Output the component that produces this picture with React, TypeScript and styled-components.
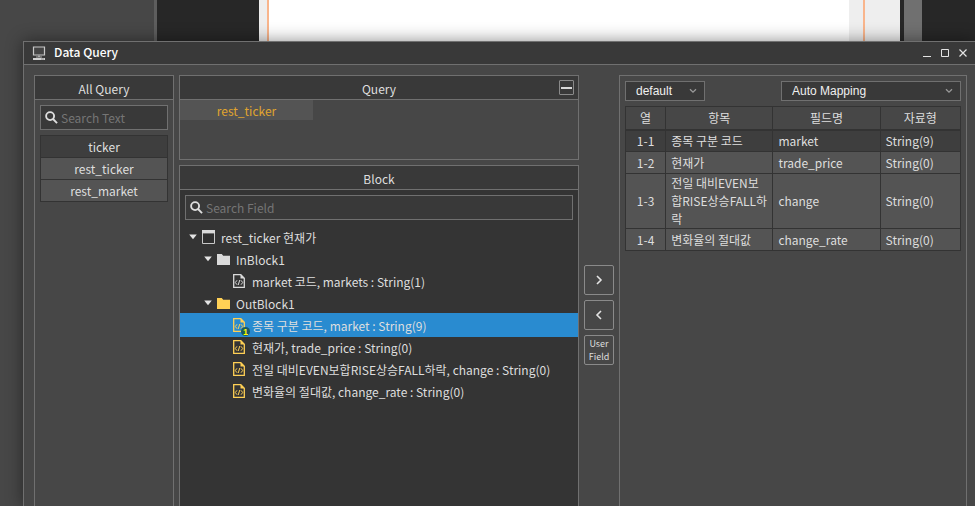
import React from "react";
import styled, { createGlobalStyle } from "styled-components";

const line = "#707070";
const bar = "#393939";
const surface = "#474747";
const text = "#dedede";
const gold = "#ffd055";

const GlobalStyle = createGlobalStyle`
  *, *::before, *::after { box-sizing: border-box; }
  body {
    margin: 0;
    background: ${surface};
    color: ${text};
    font: 12px/18px "Noto Sans CJK KR", sans-serif;
    overflow: hidden;
  }
  button, input { font: inherit; color: inherit; }
  svg { display: block; flex: none; }
`;

/* Editor canvas with the dialog stacked above it in the same grid cell */
const Screen = styled.div`
  display: grid;
  grid-template: minmax(100vh, auto) / minmax(0, 1fr);
`;
const Editor = styled.div`
  grid-area: 1 / 1;
  display: flex;
`;
const Strip = styled.div<{ $width: number; $color: string }>`
  flex: 0 0 ${(p) => p.$width}px;
  background: ${(p) => p.$color};
`;
const Paper = styled.div`
  flex: 1;
  background: #fff;
`;

const Dialog = styled.section`
  grid-area: 1 / 1;
  display: flex;
  flex-direction: column;
  margin: 41px 0 0 23px;
  background: ${surface};
  border: solid ${line};
  border-width: 1px 0 0 1px;
  box-shadow: 0 0 16px rgba(0, 0, 0, 0.45);
`;
const TitleBar = styled.header`
  display: flex;
  align-items: center;
  height: 23px;
  padding: 0 6px 0 8px;
  background: ${bar};
  border-bottom: 1px solid ${line};
`;
const Title = styled.h1`
  flex: 1;
  margin: 0 0 2px 8px;
  color: #fff;
  font-size: 12px;
  font-weight: 500;
  line-height: 18px;
`;
const WindowButtons = styled.div`
  display: flex;
  gap: 6px;
`;
const WindowButton = styled.button`
  padding: 0;
  border: 0;
  background: none;
  color: #e4e4e4;
`;
const Content = styled.div`
  flex: 1;
  display: grid;
  grid-template-columns: 140px minmax(0, 400fr) 30px minmax(0, 348fr);
  gap: 5px;
  padding: 10px 8px 0 10px;
`;
const Column = styled.div`
  display: flex;
  flex-direction: column;
  gap: 5px;
`;
const Panel = styled.section<{ $dark?: boolean; $open?: boolean; $minHeight?: number }>`
  flex: ${(p) => (p.$open ? 1 : "none")};
  min-height: ${(p) => p.$minHeight ?? 0}px;
  background: ${(p) => (p.$dark ? "#343434" : surface)};
  border: 1px solid ${line};
  border-bottom-width: ${(p) => (p.$open ? 0 : 1)}px;
`;
const PanelHeader = styled.div`
  display: grid;
  grid-template-columns: 19px 1fr 19px;
  align-items: center;
  height: 24px;
  background: ${bar};
  border-bottom: 1px solid ${line};
`;
const PanelTitle = styled.h2`
  margin: 2px 0 0;
  font-size: 12px;
  font-weight: 400;
  line-height: 18px;
  text-align: center;
  grid-column: 2;
`;
const CollapseButton = styled.button`
  display: grid;
  place-items: center;
  width: 15px;
  height: 15px;
  padding: 0;
  background: none;
  border: 1px solid #8a8a8a;
  border-radius: 1px;
`;
const SearchBox = styled.label`
  display: flex;
  align-items: center;
  gap: 3px;
  height: 25px;
  margin: 5px;
  padding: 0 4px;
  background: ${bar};
  border: 1px solid ${line};
`;
const SearchInput = styled.input`
  flex: 1;
  min-width: 0;
  height: 20px;
  padding: 0;
  border: 0;
  outline: 0;
  background: none;
  &::placeholder { color: #757575; opacity: 1; }
`;
const QueryList = styled.ul`
  margin: 0 5px;
  padding: 0;
  list-style: none;
  border: 1px solid #333;
`;
const QueryItem = styled.li`
  & + & { border-top: 1px solid #333; }
`;
const QueryButton = styled.button<{ $active?: boolean }>`
  display: block;
  width: 100%;
  height: 21px;
  padding: 1px 0 0;
  border: 0;
  line-height: 18px;
  background: ${(p) => (p.$active ? "#3e3e3e" : "#545454")};
`;
const QueryTab = styled.button`
  display: block;
  width: 133px;
  height: 20px;
  padding: 1px 0 0;
  border: 0;
  line-height: 18px;
  background: #545454;
  color: #e0a52e;
`;
const Tree = styled.ul`
  margin: 6px 0 0;
  padding: 0;
  list-style: none;
`;
const TreeRow = styled.li<{ $level: number; $selected?: boolean }>`
  display: flex;
  align-items: center;
  height: ${(p) => (p.$selected ? 24 : 22)}px;
  margin: ${(p) => (p.$selected ? "-1px 0" : "0")};
  padding-left: ${(p) => 8 + p.$level * 15}px;
  background: ${(p) => (p.$selected ? "#298bd0" : "none")};
  white-space: nowrap;
`;
const Twisty = styled.button`
  padding: 0 5px 0 1px;
  border: 0;
  background: none;
`;
const TreeLabel = styled.span`
  margin: 1px 0 0 6px;
`;
const FileMark = styled.span`
  position: relative;
  width: 13px;
`;
const Badge = styled.span`
  position: absolute;
  right: -4px;
  bottom: -4px;
  width: 9px;
  height: 9px;
  border-radius: 50%;
  background: #1c5a62;
  color: #ff0;
  font: bold 9px/10px "Liberation Sans", sans-serif;
  text-align: center;
`;
const MoveColumn = styled.div`
  display: flex;
  flex-direction: column;
  gap: 5px;
  padding-top: 190px;
`;
const MoveButton = styled.button`
  display: grid;
  place-items: center;
  height: 30px;
  padding: 0;
  background: none;
  border: 1px solid #8a8a8a;
  border-radius: 2px;
  font-size: 9px;
  line-height: 13px;
`;
const SelectRow = styled.div`
  display: flex;
  justify-content: space-between;
  padding: 5px 5px 0;
`;
const SelectBox = styled.div<{ $width: number }>`
  display: grid;
  grid-template-columns: 1fr 22px;
  align-items: center;
  width: ${(p) => p.$width}px;
  height: 20px;
  background: ${bar};
  border: 1px solid ${line};
  svg { grid-area: 1 / 2; justify-self: center; pointer-events: none; z-index: 1; }
`;
const Select = styled.select`
  grid-area: 1 / 1 / 2 / 3;
  appearance: none;
  height: 18px;
  padding: 0 20px 0 10px;
  border: 0;
  background: none;
  color: #f0f0f0;
  font: 12px/18px "Liberation Sans", sans-serif;
`;
const MappingTable = styled.table`
  width: calc(100% - 10px);
  margin: 5px 5px 0;
  border-collapse: collapse;
  table-layout: fixed;
`;
const HeadCell = styled.th<{ $share: number }>`
  width: ${(p) => p.$share}%;
  height: 23px;
  padding: 1px 0 0;
  border: 1px solid #333;
  border-bottom-width: 2px;
  font-weight: 400;
`;
const Row = styled.tr<{ $active?: boolean }>`
  background: ${(p) => (p.$active ? "#3e3e3e" : "#545454")};
`;
const Cell = styled.td<{ $center?: boolean }>`
  height: 22px;
  padding: 0 ${(p) => (p.$center ? 0 : 5)}px;
  border: 1px solid #333;
  line-height: 18px;
  text-align: ${(p) => (p.$center ? "center" : "left")};
  word-break: break-all;
`;

const SearchIcon = () => (
  <svg width="13" height="13" viewBox="0 0 14 14" fill="none" stroke="#dedede" strokeWidth="2">
    <circle cx="5.5" cy="5.5" r="4.3" />
    <path d="M8.6 8.6 13 13" />
  </svg>
);
const ComputerIcon = () => (
  <svg width="14" height="14" viewBox="0 0 14 14">
    <path d="M1.5 1h11v8h-11z" fill="#444" stroke="#c8c8c8" strokeWidth="1.2" />
    <path d="M6 9.5h2V11H6zM4 10.5h6v1H4z" fill="#aaa" />
    <path d="M1 12h12v2H1z" fill="#d0d0d0" />
    <path d="M9 12.5h3v1H9z" fill="#888" />
  </svg>
);
const ArrowDown = () => (
  <svg width="8" height="6" viewBox="0 0 8 6"><path d="M.2.5h7.6L4 5.2z" fill="#e4e4e4" /></svg>
);
const FrameIcon = () => (
  <svg width="13" height="14" viewBox="0 0 13 14">
    <path d="M.5 1.5h12v12H.5z" fill="#2f2f2f" stroke="#c8c8c8" />
    <path d="M0 0h13v3.4H0z" fill="#dadada" />
  </svg>
);
const FolderIcon = ({ color }: { color: string }) => (
  <svg width="13" height="11" viewBox="0 0 13 11"><path d="M0 0h4.8l1.4 1.8H13V11H0z" fill={color} /></svg>
);
const FileIcon = ({ color }: { color: string }) => (
  <svg width="12" height="14" viewBox="0 0 12 14" fill="none" stroke={color}>
    <path d="M.7.7h7.1l3.5 3.5v9.1H.7z" strokeWidth="1.3" />
    <path d="M7.5.5v4h4z" fill={color} stroke="none" />
    <path d="M4 6.3 2.3 8.5 4 10.7M8 6.3l1.7 2.2L8 10.7M6.8 6 5.2 11" strokeWidth="1" />
  </svg>
);
const SelectArrow = () => (
  <svg width="8" height="6" viewBox="0 0 8 6" fill="none" stroke="#999" strokeWidth="1.3">
    <path d="M1 1.2 4 4.2 7 1.2" />
  </svg>
);
const MoveIcon = ({ d }: { d: string }) => (
  <svg width="8" height="10" viewBox="0 0 8 10" fill="none" stroke="#e4e4e4" strokeWidth="1.6"><path d={d} /></svg>
);

const fields = [
  { id: "1-1", item: "종목 구분 코드", name: "market", type: "String(9)" },
  { id: "1-2", item: "현재가", name: "trade_price", type: "String(0)" },
  { id: "1-3", item: "전일 대비EVEN보합RISE상승FALL하락", name: "change", type: "String(0)" },
  { id: "1-4", item: "변화율의 절대값", name: "change_rate", type: "String(0)" },
];

const Folder = ({ level, label, icon }: { level: number; label: string; icon: React.ReactNode }) => (
  <TreeRow $level={level}>
    <Twisty aria-label={`Toggle ${label}`}><ArrowDown /></Twisty>
    {icon}
    <TreeLabel>{label}</TreeLabel>
  </TreeRow>
);

export default function App() {
  return (
    <>
      <GlobalStyle />
      <Screen>
        <Editor>
          <Strip $width={154} $color={surface} />
          <Strip $width={3} $color="#5e5e5e" />
          <Strip $width={102} $color="#272727" />
          <Strip $width={8} $color="#eeeeee" />
          <Strip $width={2} $color="#f9b58c" />
          <Paper />
          <Strip $width={14} $color="#eeeeee" />
          <Strip $width={2} $color="#f9b58c" />
          <Strip $width={35} $color="#eeeeee" />
          <Strip $width={4} $color="#272727" />
          <Strip $width={18} $color="#707070" />
          <Strip $width={53} $color="#272727" />
        </Editor>
        <Dialog aria-label="Data Query">
          <TitleBar>
            <ComputerIcon />
            <Title>Data Query</Title>
            <WindowButtons>
              <WindowButton aria-label="Minimize">
                <svg width="12" height="12" viewBox="0 0 12 12"><path d="M2 9.5h8" stroke="currentColor" /></svg>
              </WindowButton>
              <WindowButton aria-label="Maximize">
                <svg width="12" height="12" viewBox="0 0 12 12"><path d="M2.5 2.5h7v7h-7z" fill="none" stroke="currentColor" /></svg>
              </WindowButton>
              <WindowButton aria-label="Close">
                <svg width="12" height="12" viewBox="0 0 12 12"><path d="m2.5 2.5 7 7m0-7-7 7" stroke="currentColor" strokeWidth="1.2" /></svg>
              </WindowButton>
            </WindowButtons>
          </TitleBar>
          <Content>
            <Panel $open>
              <PanelHeader><PanelTitle>All Query</PanelTitle></PanelHeader>
              <SearchBox>
                <SearchIcon />
                <SearchInput placeholder="Search Text" aria-label="Search Text" />
              </SearchBox>
              <QueryList>
                {["ticker", "rest_ticker", "rest_market"].map((name, i) => (
                  <QueryItem key={name}><QueryButton $active={i === 0}>{name}</QueryButton></QueryItem>
                ))}
              </QueryList>
            </Panel>
            <Column>
              <Panel $minHeight={85}>
                <PanelHeader>
                  <PanelTitle>Query</PanelTitle>
                  <CollapseButton aria-label="Collapse Query">
                    <svg width="11" height="2" viewBox="0 0 11 2"><path d="M0 0h11v2H0z" fill="#d8d8d8" /></svg>
                  </CollapseButton>
                </PanelHeader>
                <QueryTab>rest_ticker</QueryTab>
              </Panel>
              <Panel $open $dark>
                <PanelHeader><PanelTitle>Block</PanelTitle></PanelHeader>
                <SearchBox>
                  <SearchIcon />
                  <SearchInput placeholder="Search Field" aria-label="Search Field" />
                </SearchBox>
                <Tree>
                  <Folder level={0} label="rest_ticker 현재가" icon={<FrameIcon />} />
                  <Folder level={1} label="InBlock1" icon={<FolderIcon color="#dadada" />} />
                  <TreeRow $level={3}>
                    <FileMark><FileIcon color="#dadada" /></FileMark>
                    <TreeLabel>market 코드, markets : String(1)</TreeLabel>
                  </TreeRow>
                  <Folder level={1} label="OutBlock1" icon={<FolderIcon color={gold} />} />
                  {fields.map((f, i) => (
                    <TreeRow key={f.id} $level={3} $selected={i === 0}>
                      <FileMark>
                        <FileIcon color={gold} />
                        {i === 0 && <Badge>1</Badge>}
                      </FileMark>
                      <TreeLabel>{`${f.item}, ${f.name} : ${f.type}`}</TreeLabel>
                    </TreeRow>
                  ))}
                </Tree>
              </Panel>
            </Column>
            <MoveColumn>
              <MoveButton aria-label="Add field"><MoveIcon d="M2 1l4 4-4 4" /></MoveButton>
              <MoveButton aria-label="Remove field"><MoveIcon d="M6 1 2 5l4 4" /></MoveButton>
              <MoveButton><span>User<br />Field</span></MoveButton>
            </MoveColumn>
            <Panel $open>
              <SelectRow>
                <SelectBox $width={80}>
                  <Select aria-label="Mapping set"><option>default</option></Select>
                  <SelectArrow />
                </SelectBox>
                <SelectBox $width={180}>
                  <Select aria-label="Mapping mode"><option>Auto Mapping</option></Select>
                  <SelectArrow />
                </SelectBox>
              </SelectRow>
              <MappingTable>
                <thead>
                  <tr>
                    <HeadCell $share={12}>열</HeadCell>
                    <HeadCell $share={32}>항목</HeadCell>
                    <HeadCell $share={32}>필드명</HeadCell>
                    <HeadCell $share={24}>자료형</HeadCell>
                  </tr>
                </thead>
                <tbody>
                  {fields.map((f, i) => (
                    <Row key={f.id} $active={i === 0}>
                      <Cell $center>{f.id}</Cell>
                      <Cell>{f.item}</Cell>
                      <Cell>{f.name}</Cell>
                      <Cell>{f.type}</Cell>
                    </Row>
                  ))}
                </tbody>
              </MappingTable>
            </Panel>
          </Content>
        </Dialog>
      </Screen>
    </>
  );
}
